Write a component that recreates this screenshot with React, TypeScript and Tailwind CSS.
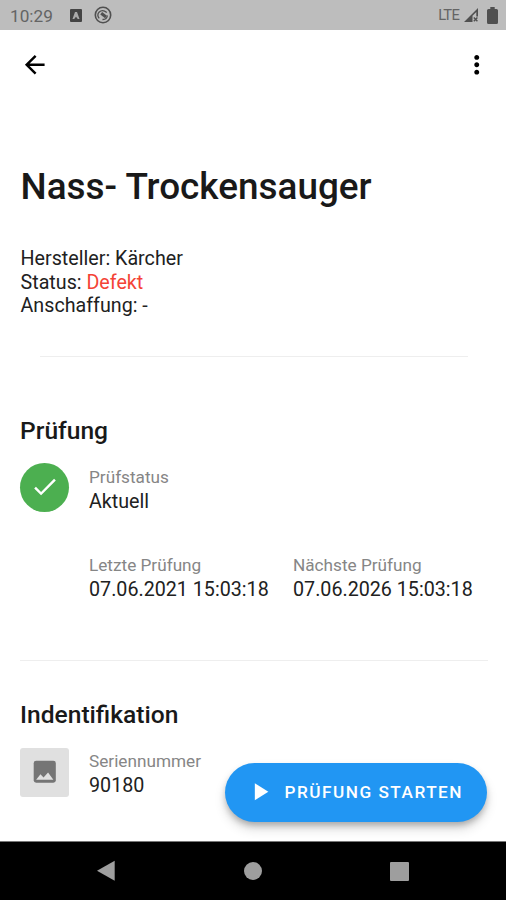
import React from "react";

interface FieldProps {
  label: string;
  value: string;
  className?: string;
}

function Field({ label, value, className = "" }: FieldProps) {
  return (
    <div className={`whitespace-nowrap ${className}`}>
      <div className="text-[17.2px] leading-6 text-[#868686]">{label}</div>
      <div className="pt-px text-[19.7px] leading-6 text-[#212121]">{value}</div>
    </div>
  );
}

function StatusBar() {
  return (
    <div className="flex h-[30px] shrink-0 items-center bg-[#bdbdbd] pl-[10px] pr-[8px] text-[#646464]">
      <span className="w-[44px] pt-[2px] text-[17.2px] leading-5">10:29</span>
      <svg className="ml-[16px] mt-px" width="12" height="13" viewBox="0 0 12 13">
        <rect width="12" height="13" rx="1" fill="#444" />
        <path d="M2.500 10 5 3h2l2.500 7H7.800L6 7.800 4.200 10z" fill="#aaa" />
      </svg>
      <svg className="ml-[12px]" width="18" height="18" viewBox="0 0 18 18" fill="none" stroke="#505050">
        <circle cx="9" cy="9" r="7.7" strokeWidth="1.6" />
        <path d="M5.200 12.400A4.900 4.900 0 0 1 5 6.200Q8.500 2.800 12.800 6.500M13.400 9.500A4.700 4.700 0 0 1 8.500 13.500" strokeWidth="1.300" />
        <path d="M7.200 7.300 12 11" strokeWidth="3" />
      </svg>
      <span className="ml-auto text-[14.8px] leading-5 tracking-[-0.8px]">LTE</span>
      <svg className="ml-[4px]" width="16" height="16" viewBox="0 0 16 16">
        <path d="M15 1v8.500h-1.700V5L9.500 8.800V15H1z" fill="#505050" />
        <path d="m10.800 10.600 3.600 3.600m0-3.600-3.600 3.600" stroke="#505050" strokeWidth="1.400" />
      </svg>
      <svg className="ml-[8px]" width="11" height="17" viewBox="0 0 11 17" fill="#505050">
        <path d="M3.300 0h4.400v2H9.500Q11 2 11 3.500v12Q11 17 9.500 17h-8Q0 17 0 15.500v-12Q0 2 1.500 2h1.800z" />
      </svg>
    </div>
  );
}

function AppBar() {
  return (
    <header className="flex h-[69px] shrink-0 items-center justify-between pl-[20px] pr-[14.5px] text-black">
      <button aria-label="Zurück">
        <svg width="29.5" height="29.5" viewBox="0 0 24 24" fill="currentColor">
          <path d="M20 11H7.830l5.590-5.590L12 4l-8 8 8 8 1.410-1.410L7.830 13H20z" />
        </svg>
      </button>
      <button aria-label="Menü">
        <svg width="29.5" height="29.5" viewBox="0 0 24 24" fill="currentColor">
          <path d="M12 8c1.100 0 2-.9 2-2s-.9-2-2-2-2 .9-2 2 .9 2 2 2zm0 2c-1.100 0-2 .9-2 2s.9 2 2 2 2-.9 2-2-.9-2-2-2zm0 6c-1.100 0-2 .9-2 2s.9 2 2 2 2-.9 2-2-.9-2-2-2z" />
        </svg>
      </button>
    </header>
  );
}

function NavigationBar() {
  return (
    <nav className="flex h-[59px] shrink-0 items-center justify-between border-t border-[#777] bg-black pl-[96px] pr-[97px]">
      <svg width="20" height="22" viewBox="0 0 20 22" fill="#9e9e9e">
        <path d="M18.700 .8v20L1 10.800z" />
      </svg>
      <div className="size-[18px] rounded-full bg-[#9e9e9e]" />
      <div className="size-[19px] rounded-[1px] bg-[#9e9e9e]" />
    </nav>
  );
}

export default function App() {
  return (
    <div className="relative flex h-[900px] w-[506px] flex-col overflow-hidden bg-white font-[Roboto,sans-serif] text-[#212121]">
      <StatusBar />
      <AppBar />

      <main className="min-h-0 flex-1 overflow-hidden px-[20px] pt-[66px]">
        <h1 className="whitespace-nowrap pl-[0.5px] text-[36.9px] font-medium leading-[44px] text-[#191919]">
          Nass- Trockensauger
        </h1>
        <div className="mt-[38px] pl-[0.5px] text-[19.7px] leading-[23.5px]">
          <p>Hersteller: Kärcher</p>
          <p>
            Status: <span className="text-[#f44336]">Defekt</span>
          </p>
          <p>Anschaffung: -</p>
        </div>
        <div className="ml-[20px] mr-[18px] mt-[38px] h-px bg-[#eee]" />

        <section className="mt-[59px]">
          <h2 className="text-[24.6px] font-medium leading-[30px] text-[#191919]">Prüfung</h2>
          <div className="mt-[17px] flex">
            <div className="flex size-[49px] items-center justify-center rounded-full bg-[#4caf50]">
              <svg width="29.5" height="29.5" viewBox="0 0 24 24" fill="#fff">
                <path d="M9 16.170 4.830 12l-1.420 1.410L9 19 21 7l-1.410-1.410z" />
              </svg>
            </div>
            <Field className="ml-[20px] pt-[2px]" label="Prüfstatus" value="Aktuell" />
          </div>
          <div className="mt-[39px] flex pl-[69px]">
            <Field className="w-[204px]" label="Letzte Prüfung" value="07.06.2021 15:03:18" />
            <Field label="Nächste Prüfung" value="07.06.2026 15:03:18" />
          </div>
        </section>
        <div className="-mr-[2px] mt-[58px] h-px bg-[#eee]" />

        <section className="mt-[39px]">
          <h2 className="text-[24.6px] font-medium leading-[30px] text-[#191919]">Indentifikation</h2>
          <div className="mt-[18px] flex">
            <div className="flex size-[49px] items-center justify-center rounded-[3px] bg-[#e0e0e0] pb-px">
              <svg width="29.5" height="29.5" viewBox="0 0 24 24">
                <rect x="3" y="3" width="18" height="18" rx="2" fill="#757575" />
                <path d="M5 18.500 8.500 14l2.500 2.600L14.700 12.600 19 18.500z" fill="#e0e0e0" />
              </svg>
            </div>
            <Field className="ml-[20px] pt-px" label="Seriennummer" value="90180" />
          </div>
        </section>
      </main>

      <NavigationBar />

      {/* Floating action button */}
      <button className="absolute bottom-[78px] right-[19px] flex h-[59px] w-[262px] items-center whitespace-nowrap rounded-full bg-[#2196f3] pb-px pl-[19.5px] text-white shadow-[0_4px_6px_-1px_rgba(0,0,0,0.25),0_7px_12px_rgba(0,0,0,0.14)]">
        <svg width="29.5" height="29.5" viewBox="0 0 24 24" fill="currentColor">
          <path d="M8 5v14l11-7z" />
        </svg>
        <span className="ml-[10.5px] text-[17.2px] font-medium leading-5 tracking-[1.5px]">PRÜFUNG STARTEN</span>
      </button>
    </div>
  );
}
